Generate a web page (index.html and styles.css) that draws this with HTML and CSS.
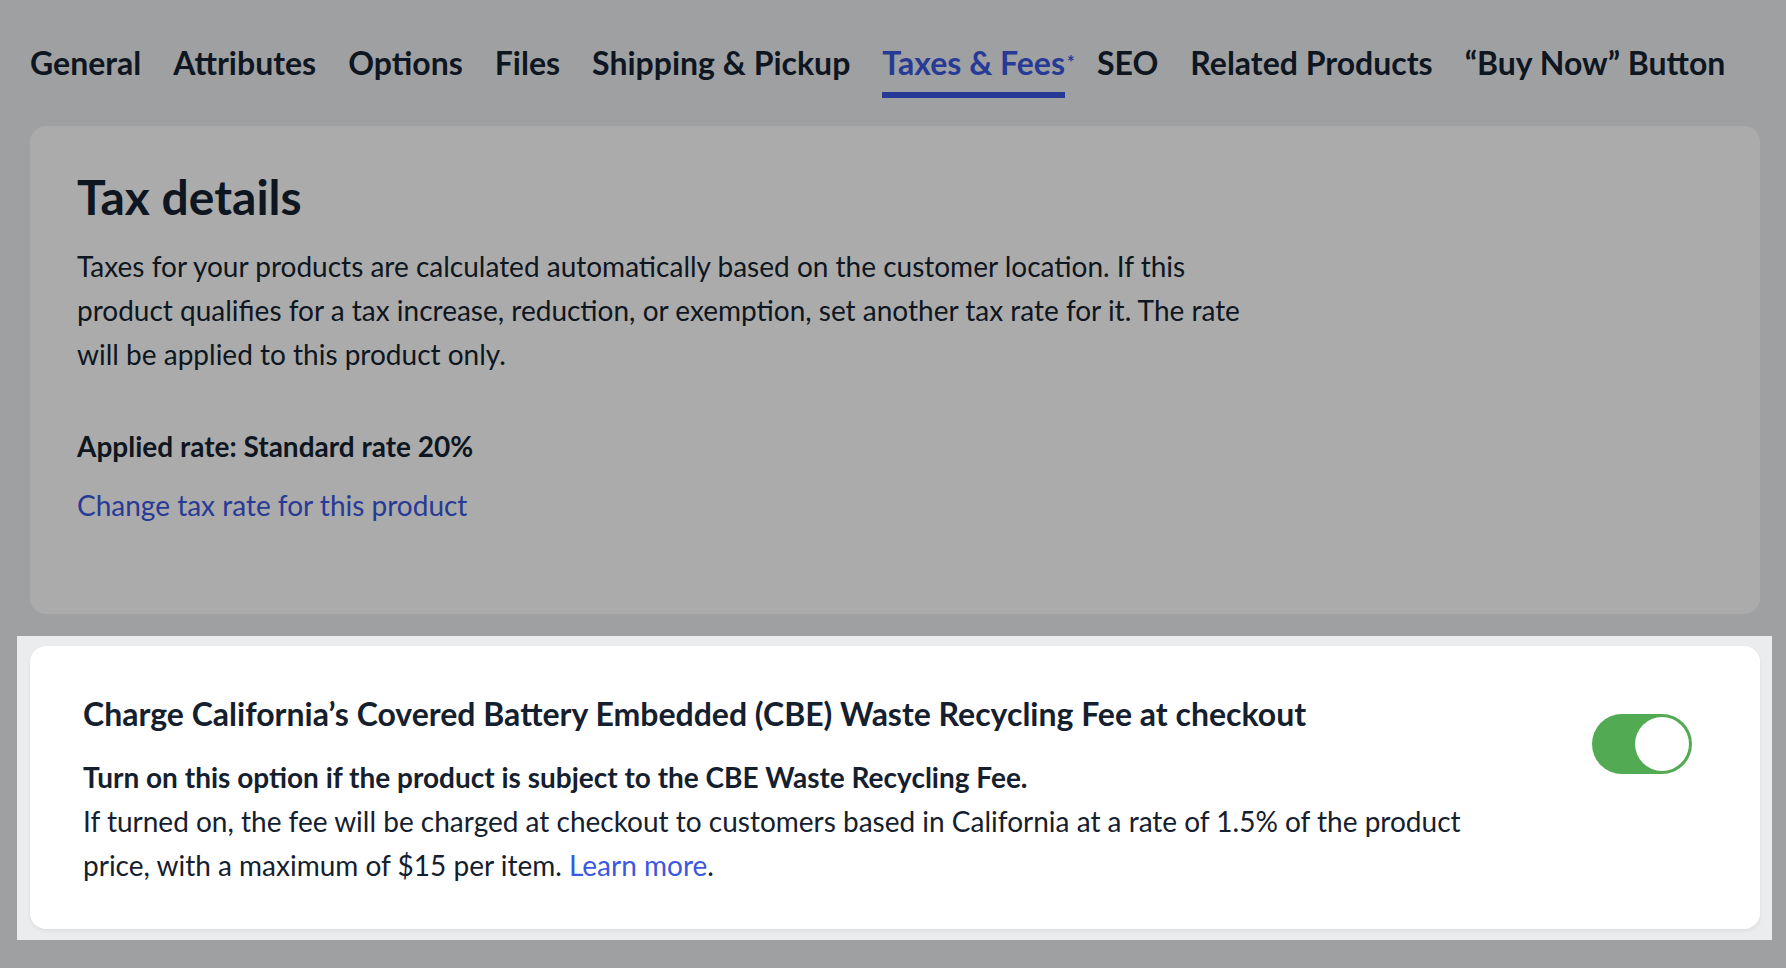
FILE: index.html
```html
<!DOCTYPE html>
<html lang="en">
<head>
<meta charset="utf-8">
<title>Taxes &amp; Fees</title>
<link rel="stylesheet" href="styles.css">
</head>
<body>
<div class="page">
  <nav class="tabs">
    <a class="tab">General</a>
    <a class="tab">Attributes</a>
    <a class="tab">Options</a>
    <a class="tab">Files</a>
    <a class="tab">Shipping &amp; Pickup</a>
    <a class="tab tab-active">Taxes &amp; Fees<span class="tab-star">*</span></a>
    <a class="tab">SEO</a>
    <a class="tab">Related Products</a>
    <a class="tab">“Buy Now” Button</a>
  </nav>

  <section class="card card-dim">
    <h1 class="card-title">Tax details</h1>
    <p class="card-text">Taxes for your products are calculated automatically based on the customer location. If this product qualifies for a tax increase, reduction, or exemption, set another tax rate for it. The rate will be applied to this product only.</p>
    <p class="applied">Applied rate: Standard rate 20%</p>
    <a class="dim-link">Change tax rate for this product</a>
  </section>

  <div class="spotlight">
    <section class="card card-fee">
      <div class="fee-text">
        <h2 class="fee-title">Charge California’s Covered Battery Embedded (CBE) Waste Recycling Fee at checkout</h2>
        <p class="fee-sub">Turn on this option if the product is subject to the CBE Waste Recycling Fee.</p>
        <p class="fee-desc">If turned on, the fee will be charged at checkout to customers based in California at a rate of 1.5% of the product price, with a maximum of $15 per item. <a class="link">Learn more</a>.</p>
      </div>
      <div class="toggle"><span class="knob"></span></div>
    </section>
  </div>
</div>
</body>
</html>
```

FILE: styles.css
```css
html, body {
  margin: 0;
  padding: 0;
  background: #9fa0a2;
  font-family: Lato, "Noto Sans", "Liberation Sans", sans-serif;
  color: #0e1621;
}

.page {
  padding: 44px 26px 0 30px;
}

.tabs {
  display: flex;
  gap: 32px;
}

.tab {
  position: relative;
  font-size: 32px;
  font-weight: 700;
  line-height: 38px;
  padding-bottom: 10px;
  border-bottom: 6px solid transparent;
  color: #0e1621;
  white-space: nowrap;
}

.tab-active {
  color: #273a96;
  border-bottom-color: #273a96;
}

.tab-star {
  position: absolute;
  left: 100%;
  top: 9px;
  margin-left: 2px;
  font-size: 18px;
  line-height: 18px;
  font-weight: 700;
}

.card {
  border-radius: 16px;
}

.card-dim {
  margin-top: 28px;
  background: #ababab;
  padding: 42px 47px 87px;
}

.card-title {
  margin: 0 0 18px;
  font-size: 48px;
  line-height: 58px;
  font-weight: 700;
}

.card-text {
  margin: 0;
  max-width: 1180px;
  font-size: 28px;
  line-height: 44px;
}

.applied {
  margin: 48px 0 0;
  font-size: 28px;
  line-height: 44px;
  font-weight: 700;
}

.dim-link {
  display: block;
  margin-top: 15px;
  font-size: 28px;
  line-height: 44px;
  color: #273a96;
}

.spotlight {
  margin: 22px -12px 0 -13px;
  padding: 10px 12px 11px 13px;
  background: #ebecee;
}

.card-fee {
  background: #ffffff;
  padding: 50px 68px 42px 53px;
  display: flex;
  align-items: flex-start;
  color: #15202f;
  box-shadow: 0 2px 4px rgba(0, 0, 0, 0.06);
}

.fee-text {
  width: 1410px;
}

.fee-title {
  margin: 0 0 23px;
  font-size: 32px;
  line-height: 36px;
  font-weight: 700;
}

.fee-sub {
  margin: 0;
  font-size: 28px;
  line-height: 44px;
  font-weight: 700;
}

.fee-desc {
  margin: 0;
  font-size: 28px;
  line-height: 44px;
}

.link {
  color: #3a59e0;
}

.toggle {
  margin-left: auto;
  margin-top: 18px;
  width: 100px;
  height: 60px;
  box-sizing: border-box;
  border-radius: 30px;
  background: #52aa52;
  padding: 3px;
  display: flex;
  justify-content: flex-end;
}

.knob {
  width: 54px;
  height: 54px;
  border-radius: 50%;
  background: #ffffff;
}
```
